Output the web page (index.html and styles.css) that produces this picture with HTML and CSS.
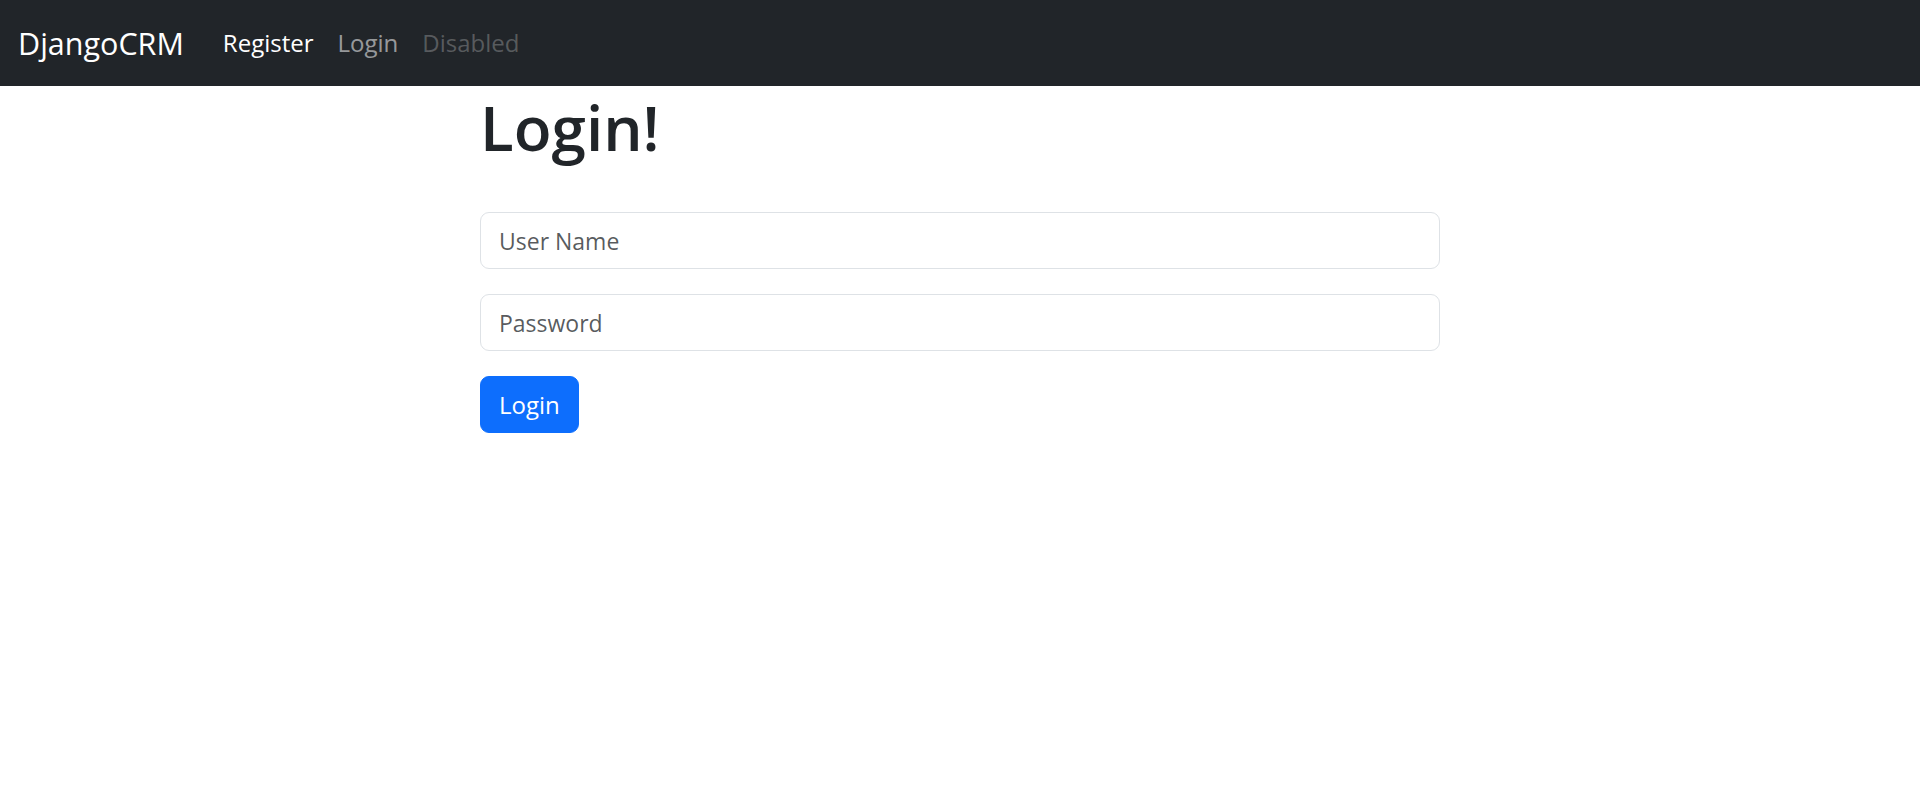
FILE: index.html
```html
<!DOCTYPE html>
<html lang="en">
<head>
<meta charset="utf-8">
<title>DjangoCRM</title>
<link rel="stylesheet" href="styles.css">
</head>
<body>
<nav class="navbar">
  <a class="brand" href="#">DjangoCRM</a>
  <ul class="nav-links">
    <li><a class="nav-link active" href="#">Register</a></li>
    <li><a class="nav-link" href="#">Login</a></li>
    <li><span class="nav-link disabled">Disabled</span></li>
  </ul>
</nav>
<main class="content">
  <h1 class="title">Login!</h1>
  <form class="login-form">
    <input class="field" type="text" placeholder="User Name">
    <input class="field" type="password" placeholder="Password">
    <button class="btn-primary" type="button">Login</button>
  </form>
</main>
</body>
</html>
```
FILE: styles.css
```css
* { box-sizing: border-box; }

body {
  margin: 0;
  font-family: "Open Sans", "Noto Sans", sans-serif;
  color: #212529;
  background: #fff;
}

.navbar {
  height: 86px;
  background: #212529;
  display: flex;
  align-items: center;
  padding: 0 18px;
}

.brand {
  font-size: 30.5px;
  line-height: 45px;
  color: #fff;
  text-decoration: none;
  margin-right: 27px;
}

.nav-links {
  display: flex;
  list-style: none;
  margin: 0;
  padding: 0;
}

.nav-link {
  display: block;
  font-size: 24px;
  line-height: 36px;
  padding: 6px 12px;
  text-decoration: none;
  color: rgba(255, 255, 255, 0.55);
}

.nav-link.active { color: #fff; }
.nav-link.disabled { color: rgba(255, 255, 255, 0.25); }

.content {
  width: 50%;
  margin: 0 auto;
}

.title {
  font-size: 62px;
  font-weight: 600;
  line-height: 72px;
  margin: 5px 0 0;
}

.login-form {
  display: flex;
  flex-direction: column;
  align-items: flex-start;
  gap: 25px;
  margin-top: 49px;
}

.field {
  width: 100%;
  height: 57px;
  padding: 0 18px;
  font-family: inherit;
  font-size: 23px;
  color: #212529;
  border: 1px solid #dee2e6;
  border-radius: 9px;
  background: #fff;
  outline: none;
}

.field::placeholder { color: rgba(33, 37, 41, 0.75); }

.btn-primary {
  height: 57px;
  padding: 0 18px;
  font-family: inherit;
  font-size: 24px;
  color: #fff;
  background: #0d6efd;
  border: 1px solid #0d6efd;
  border-radius: 9px;
}
```
